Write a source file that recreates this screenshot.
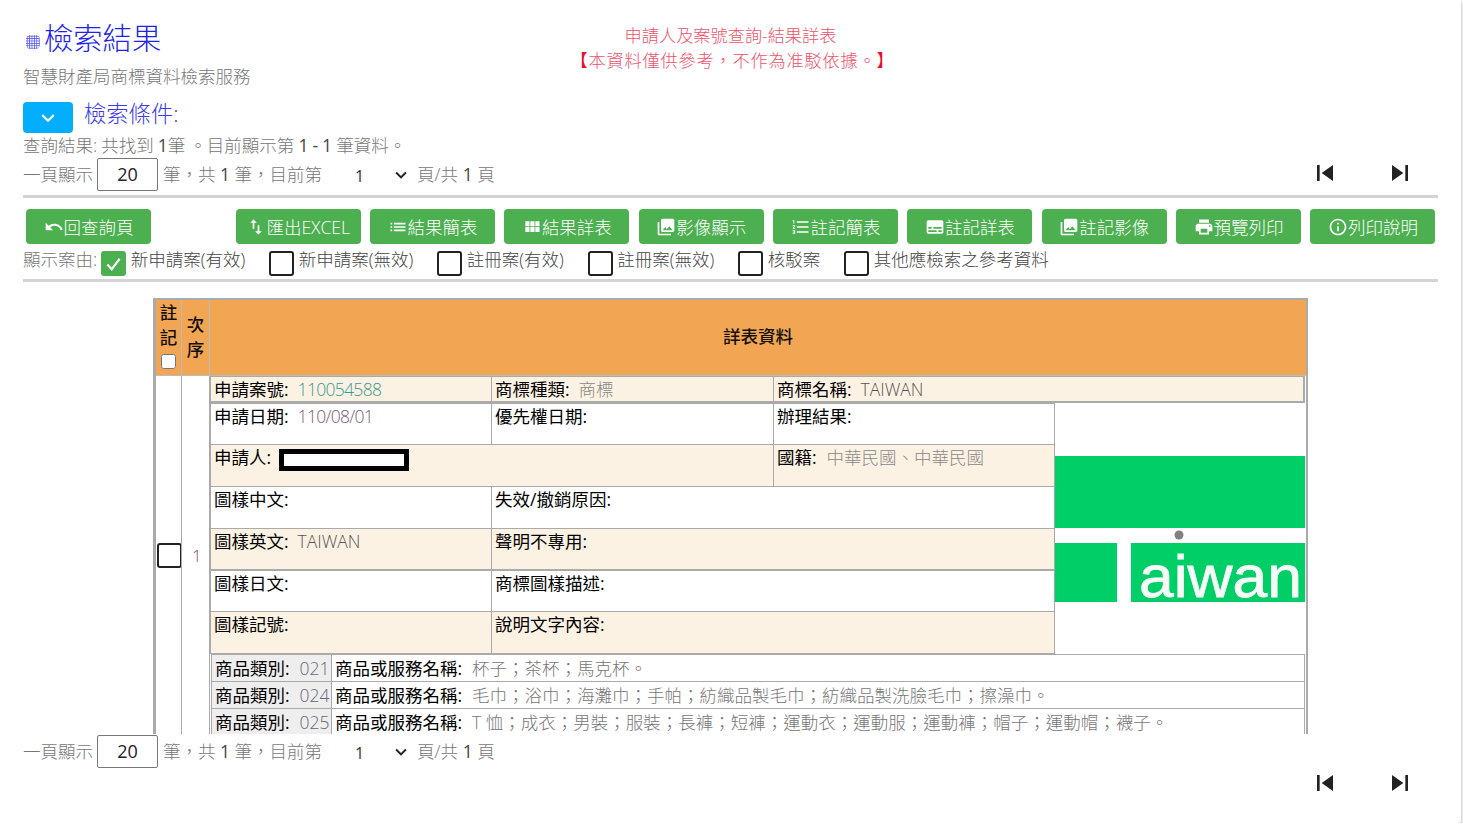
<script setup lang="ts">
import { ref } from 'vue'

interface Btn {
  label: string
  icon: string
}

const P_LIST = 'M3 13h2v-2H3v2zm0 4h2v-2H3v2zm0-8h2V7H3v2zm4 4h14v-2H7v2zm0 4h14v-2H7v2zM7 7v2h14V7H7z'
const P_PHOTO = 'M22 16V4c0-1.1-.9-2-2-2H8c-1.1 0-2 .9-2 2v12c0 1.1.9 2 2 2h12c1.1 0 2-.9 2-2zm-11-4l2.03 2.71L16 11l4 5H8l3-4zM2 6v14c0 1.1.9 2 2 2h14v-2H4V6H2z'
const P_UNDO = 'M12.5 8c-2.65 0-5.05.99-6.9 2.6L2 7v9h9l-3.62-3.62c1.39-1.16 3.16-1.88 5.12-1.88 3.54 0 6.55 2.31 7.6 5.5l2.37-.78C21.08 11.03 17.15 8 12.5 8z'
const P_DOWN = 'M7.41 8.59L12 13.17l4.59-4.58L18 10l-6 6-6-6 1.41-1.41z'
const P_PREV = 'M6 6h2v12H6zm3.5 6l8.5 6V6z'
const P_NEXT = 'M6 18l8.5-6L6 6v12zM16 6v12h2V6h-2z'

const buttons = ref<Btn[]>([
  { label: '匯出EXCEL', icon: 'M9 3L5 6.99h3V14h2V6.99h3L9 3zm7 14.01V10h-2v7.01h-3L15 21l4-3.99h-3z' },
  { label: '結果簡表', icon: P_LIST },
  { label: '結果詳表', icon: 'M4 11h5V5H4v6zm0 7h5v-6H4v6zm6 0h5v-6h-5v6zm6 0h5v-6h-5v6zm-6-7h5V5h-5v6zm6-6v6h5V5h-5z' },
  { label: '影像顯示', icon: P_PHOTO },
  { label: '註記簡表', icon: 'M2 17h2v.5H3v1h1v.5H2v1h3v-4H2v1zm1-9h1V4H2v1h1v3zm-1 3h1.8L2 13.1v.9h3v-1H3.2L5 10.9V10H2v1zm5-6v2h14V5H7zm0 14h14v-2H7v2zm0-6h14v-2H7v2z' },
  { label: '註記詳表', icon: 'M20 4H4c-1.1 0-2 .9-2 2v12c0 1.1.9 2 2 2h16c1.1 0 2-.9 2-2V6c0-1.1-.9-2-2-2zM4 12h4v2H4v-2zm10 6H4v-2h10v2zm6 0h-4v-2h4v2zm0-4H10v-2h10v2z' },
  { label: '註記影像', icon: P_PHOTO },
  { label: '預覽列印', icon: 'M19 8H5c-1.66 0-3 1.34-3 3v6h4v4h12v-4h4v-6c0-1.66-1.34-3-3-3zm-3 11H8v-5h8v5zm3-7c-.55 0-1-.45-1-1s.45-1 1-1 1 .45 1 1-.45 1-1 1zm-1-9H6v4h12V3z' },
  { label: '列印說明', icon: 'M11 7h2v2h-2zm0 4h2v6h-2zm1-9C6.48 2 2 6.48 2 12s4.48 10 10 10 10-4.48 10-10S17.52 2 12 2zm0 18c-4.41 0-8-3.59-8-8s3.59-8 8-8 8 3.59 8 8-3.59 8-8 8z' }
])

const filters = ref([
  { label: '新申請案(有效)', checked: true },
  { label: '新申請案(無效)', checked: false },
  { label: '註冊案(有效)', checked: false },
  { label: '註冊案(無效)', checked: false },
  { label: '核駁案', checked: false },
  { label: '其他應檢索之參考資料', checked: false }
])

const goods = ref([
  { code: '021', names: '杯子；茶杯；馬克杯。' },
  { code: '024', names: '毛巾；浴巾；海灘巾；手帕；紡織品製毛巾；紡織品製洗臉毛巾；擦澡巾。' },
  { code: '025', names: 'T 恤；成衣；男裝；服裝；長褲；短褲；運動衣；運動服；運動褲；帽子；運動帽；襪子。' }
])
</script>

<template>
  <div class="page">
    <header class="top">
      <div>
        <h1 class="title"><span class="dots"></span>檢索結果</h1>
        <p class="service">智慧財產局商標資料檢索服務</p>
      </div>
      <div class="notice">
        <div>申請人及案號查詢-結果詳表</div>
        <div class="notice-sub"><b class="bracket">【</b>本資料僅供參考，不作為准駁依據。<b class="bracket">】</b></div>
      </div>
      <div></div>
    </header>

    <div class="cond">
      <button class="cond-btn">
        <svg viewBox="0 0 24 24" width="26" height="26"><path :d="P_DOWN" fill="#fff" /></svg>
      </button>
      <span class="cond-text">檢索條件:</span>
    </div>

    <div class="summary">查詢結果: 共找到 <em>1</em>筆 。目前顯示第 <em>1 - 1</em> 筆資料。</div>

    <div class="pager">
      <span>一頁顯示</span>
      <span class="size">20</span>
      <span class="after">筆，共 <em>1</em> 筆，目前第</span>
      <span class="sel">1</span>
      <svg class="chev" viewBox="0 0 24 24" width="22" height="22"><path :d="P_DOWN" fill="#222" /></svg>
      <span>頁/共 <em>1</em> 頁</span>
      <span class="skips upper">
        <svg viewBox="0 0 24 24" width="32" height="32"><path :d="P_PREV" fill="#222" /></svg>
        <svg viewBox="0 0 24 24" width="32" height="32"><path :d="P_NEXT" fill="#222" /></svg>
      </span>
    </div>

    <hr class="rule" />

    <div class="actions">
      <button class="act back">
        <svg viewBox="0 0 24 24" width="20" height="20"><path :d="P_UNDO" fill="#fff" /></svg>回查詢頁
      </button>
      <button v-for="b in buttons" :key="b.label" class="act">
        <svg viewBox="0 0 24 24" width="20" height="20"><path :d="b.icon" fill="#fff" /></svg>{{ b.label }}
      </button>
    </div>

    <div class="filters">
      <span class="filter-title">顯示案由:</span>
      <label v-for="f in filters" :key="f.label" class="filter">
        <span class="box" :class="{ on: f.checked }">
          <svg v-if="f.checked" viewBox="0 0 24 24" width="22" height="22">
            <path d="M5 12.5l5 5.5 9-12" fill="none" stroke="#fff" stroke-width="2.4" />
          </svg>
        </span>
        <span>{{ f.label }}</span>
      </label>
    </div>

    <hr class="rule second" />

    <div class="scroller">
      <table class="outer">
        <colgroup>
          <col class="c1" />
          <col class="c2" />
          <col />
        </colgroup>
        <thead>
          <tr>
            <th class="narrow top-align">註<br />記<br /><input type="checkbox" class="head-check" /></th>
            <th class="narrow">次<br />序</th>
            <th class="head-main">詳表資料</th>
          </tr>
        </thead>
        <tbody>
          <tr>
            <td class="mid"><span class="box row-box"></span></td>
            <td class="mid seq">1</td>
            <td class="detail-cell">
              <table class="name-row">
                <tr>
                  <td class="w281"><b>申請案號:</b><span class="val teal num">110054588</span></td>
                  <td class="w282"><b>商標種類:</b><span class="val">商標</span></td>
                  <td><b>商標名稱:</b><span class="val dark">TAIWAN</span></td>
                </tr>
              </table>
              <table class="detail">
                <colgroup>
                  <col class="w281" />
                  <col class="w282" />
                  <col class="w281" />
                  <col />
                </colgroup>
                <tr>
                  <td><b>申請日期:</b><span class="val plum num">110/08/01</span></td>
                  <td><b>優先權日期:</b></td>
                  <td><b>辦理結果:</b></td>
                  <td rowspan="6" class="logo-cell">
                    <svg viewBox="0 0 250 146" width="250" height="146" class="logo">
                      <rect x="0" y="0" width="250" height="72" fill="#00ce66" />
                      <rect x="0" y="87" width="62" height="59" fill="#00ce66" />
                      <rect x="76" y="87" width="174" height="59" fill="#00ce66" />
                      <circle cx="124" cy="79" r="4.5" fill="#808080" />
                      <text x="84" y="141" fill="#f6fbf8" stroke="#f6fbf8" stroke-width="0.8" font-size="60" textLength="163" lengthAdjust="spacingAndGlyphs" font-family="'Liberation Sans', sans-serif">aiwan</text>
                    </svg>
                  </td>
                </tr>
                <tr class="alt">
                  <td colspan="2"><b>申請人:</b><span class="redact"></span></td>
                  <td><b>國籍:</b><span class="val wide">中華民國、中華民國</span></td>
                </tr>
                <tr>
                  <td><b>圖樣中文:</b></td>
                  <td colspan="2"><b>失效/撤銷原因:</b></td>
                </tr>
                <tr class="alt thick">
                  <td><b>圖樣英文:</b><span class="val dark">TAIWAN</span></td>
                  <td colspan="2"><b>聲明不專用:</b></td>
                </tr>
                <tr>
                  <td><b>圖樣日文:</b></td>
                  <td colspan="2"><b>商標圖樣描述:</b></td>
                </tr>
                <tr class="alt">
                  <td><b>圖樣記號:</b></td>
                  <td colspan="2"><b>說明文字內容:</b></td>
                </tr>
              </table>
              <table class="goods">
                <tr v-for="g in goods" :key="g.code">
                  <td class="code"><b>商品類別:</b><span class="val slate">{{ g.code }}</span></td>
                  <td><b>商品或服務名稱:</b><span class="val names">{{ g.names }}</span></td>
                </tr>
              </table>
            </td>
          </tr>
        </tbody>
      </table>
    </div>

    <div class="pager lower">
      <span>一頁顯示</span>
      <span class="size">20</span>
      <span class="after">筆，共 <em>1</em> 筆，目前第</span>
      <span class="sel">1</span>
      <svg class="chev" viewBox="0 0 24 24" width="22" height="22"><path :d="P_DOWN" fill="#222" /></svg>
      <span>頁/共 <em>1</em> 頁</span>
    </div>
    <div class="skips bottom">
      <svg viewBox="0 0 24 24" width="32" height="32"><path :d="P_PREV" fill="#222" /></svg>
      <svg viewBox="0 0 24 24" width="32" height="32"><path :d="P_NEXT" fill="#222" /></svg>
    </div>
  </div>
</template>

<style>
html,
body {
  background: #fff;
  overflow: hidden;
}
</style>

<style scoped>
.page {
  box-sizing: border-box;
  width: 1461px;
  height: 823px;
  padding: 0 23px 0 23px;
  overflow: hidden;
  background: #fff;
  border-bottom-right-radius: 3px;
  box-shadow: 0 2px 4px rgba(0, 0, 0, 0.35);
  color: #777;
  font-family: "Open Sans", "Noto Sans CJK TC", sans-serif;
  font-size: 17.5px;
  font-weight: 300;
}

em {
  font-style: normal;
  color: #444;
  font-weight: 400;
}

/* header */
.top {
  display: grid;
  grid-template-columns: 1fr auto 1fr;
  height: 102px;
}

.title {
  display: flex;
  align-items: center;
  height: 44px;
  margin: 16px 0 0;
  color: #2222ee;
  font-size: 29.3px;
  font-weight: 300;
  line-height: 44px;
}

.dots {
  width: 14px;
  height: 14px;
  margin: 7px 4px 0 3px;
  background-image: radial-gradient(circle, #2a2af0 0.9px, transparent 1.1px);
  background-size: 2.4px 2.4px;
  border-radius: 30%;
  opacity: 0.75;
}

.service {
  margin: 4px 0 0;
  line-height: 24px;
}

.notice {
  padding-top: 23px;
  color: #f0516a;
  font-size: 17.2px;
  line-height: 25px;
  text-align: center;
}

.notice-sub {
  padding-left: 4px;
  letter-spacing: 0.8px;
}

.bracket {
  color: #e8102c;
  font-weight: 400;
}

.cond {
  display: flex;
  align-items: flex-start;
  height: 31px;
}

.cond-btn {
  display: flex;
  align-items: center;
  justify-content: center;
  width: 50px;
  height: 31px;
  padding: 0;
  background: #03aefc;
  border: none;
  border-radius: 4px;
}

.cond-text {
  margin: -3px 0 0 11px;
  color: #3a3af0;
  font-size: 22.3px;
  line-height: 30px;
}

.summary {
  height: 25px;
  line-height: 24px;
  word-spacing: -0.5px;
}

/* pagination */
.pager {
  display: flex;
  align-items: center;
  height: 33px;
  line-height: 33px;
}

.size {
  box-sizing: border-box;
  width: 61px;
  height: 33px;
  margin: 0 5px 0 4px;
  color: #222;
  font-size: 18px;
  font-weight: 400;
  line-height: 31px;
  text-align: center;
  border: 1px solid #777;
  border-radius: 2px;
}

.sel {
  width: 35px;
  margin: 2px 0 0 33px;
  color: #333;
  font-size: 16px;
  font-weight: 400;
  line-height: 38px;
}

.chev {
  margin-right: 5px;
}

.skips {
  display: flex;
  gap: 43px;
  margin-left: auto;
  margin-right: 22px;
}

.upper {
  margin-bottom: 3px;
}

.rule {
  height: 3px;
  margin: 4px 0 11px;
  background: #d4d4d4;
  border: none;
}

/* action buttons */
.actions {
  display: flex;
  gap: 9.35px;
  height: 35px;
  padding-left: 3px;
}

.act {
  display: flex;
  align-items: center;
  justify-content: center;
  width: 125px;
  height: 35px;
  padding: 0;
  background: #4caf50;
  border: none;
  border-radius: 4px;
  color: #fff;
  font-family: inherit;
  font-size: 17.5px;
  font-weight: 300;
  white-space: nowrap;
}

.back {
  margin-right: 75.35px;
}

.filters {
  display: flex;
  align-items: flex-start;
  height: 35px;
  padding-top: 3px;
  box-sizing: border-box;
}

.filter-title {
  margin-right: 4px;
  line-height: 24px;
}

.filter {
  display: flex;
  margin-right: 24px;
  color: #444;
  line-height: 24px;
}

.box {
  box-sizing: border-box;
  display: flex;
  flex: none;
  align-items: center;
  justify-content: center;
  width: 25px;
  height: 25px;
  margin: 4px 4.5px 0 0;
  background: #fff;
  border: 2px solid #222;
  border-radius: 3px;
}

.box.on {
  background: #4caf50;
  border-color: #4caf50;
}

.second {
  margin: 0 0 16px;
}

/* results table */
.scroller {
  width: 1156px;
  height: 436px;
  margin-left: 130px;
  overflow: hidden;
}

table {
  border-collapse: collapse;
  table-layout: fixed;
}

.outer {
  width: 1155px;
  border: 2px solid #aaa;
  border-left-width: 3px;
  color: #111;
  font-size: 17.5px;
}

.c1 {
  width: 27px;
}

.c2 {
  width: 28px;
}

.outer th {
  box-sizing: border-box;
  height: 76px;
  padding: 0;
  background: #f2a553;
  border: 1px solid #bbb;
  color: #111;
  font-size: 17.5px;
  font-weight: 500;
}

.outer th.head-main {
  padding-bottom: 4px;
}

.narrow {
  line-height: 25px;
}

.outer th.top-align {
  padding-top: 0;
  vertical-align: top;
}

.head-check {
  display: block;
  width: 15px;
  height: 15px;
  margin: 4px auto 0 5px;
}

.outer > tbody > tr > td {
  padding: 0;
  border-right: 1px solid #aaa;
}

.mid {
  vertical-align: middle;
}

.row-box {
  margin: 0 0 0 1px;
}

.seq {
  padding-left: 10px !important;
  color: #8a4a74;
  font-size: 17px;
}

.detail-cell {
  vertical-align: top;
}

.w281 {
  width: 281px;
}

.w282 {
  width: 282px;
}

b {
  font-weight: 400;
  color: #000;
}

.val {
  margin-left: 9px;
  color: #888;
  font-weight: 300;
}

.num {
  letter-spacing: -0.7px;
}

.teal {
  color: #3a9a8e;
}

.plum {
  color: #7a5a78;
}

.dark {
  color: #555;
}

.slate {
  color: #667;
}

.wide {
  margin-left: 10px;
}

.names {
  color: #777;
}

.name-row {
  width: 1095px;
  height: 27px;
}

.name-row td {
  box-sizing: border-box;
  padding: 0 3px;
  background: #fcf2e4;
  border: 1px solid #aaa;
  border-bottom-width: 2px;
  line-height: 24px;
  white-space: nowrap;
}

.name-row td:last-child {
  border-right-width: 2px;
}

.detail {
  width: 1095px;
}

.detail td {
  box-sizing: border-box;
  height: 41.8px;
  padding: 0 3px;
  border: 1px solid #aaa;
  line-height: 24px;
  vertical-align: top;
  white-space: nowrap;
}

.alt td {
  background: #fcf2e4;
}

.thick td {
  border-bottom-width: 2px;
}

.detail .logo-cell {
  padding: 0;
  background: #fff;
  border: none;
  vertical-align: middle;
}

.logo {
  display: block;
  margin-top: 1px;
  overflow: visible;
}

.redact {
  display: inline-block;
  box-sizing: border-box;
  width: 130px;
  height: 22px;
  margin-left: 8px;
  background: #fff;
  border: 5px solid #000;
  vertical-align: middle;
}

.goods {
  width: 1094px;
  margin-left: 1px;
}

.goods td {
  box-sizing: border-box;
  height: 27px;
  padding: 0 3px;
  background: #fff;
  border: 1px solid #aaa;
  line-height: 25px;
  white-space: nowrap;
}

.goods .code {
  width: 120px;
  background: #eee;
}

.goods .val {
  margin-left: 10px;
}

.lower {
  margin-top: 1px;
}

.bottom {
  justify-content: flex-end;
  margin-top: -1px;
}
</style>
